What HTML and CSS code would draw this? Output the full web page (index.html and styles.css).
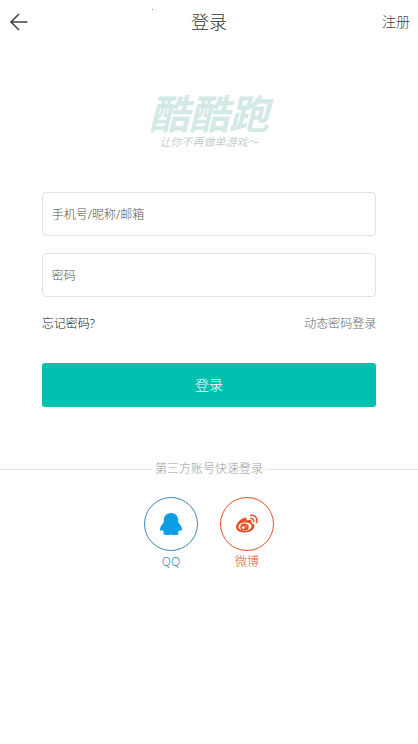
FILE: index.html
```html
<!DOCTYPE html>
<html lang="zh-CN">
<head>
<meta charset="utf-8">
<meta name="viewport" content="width=device-width, initial-scale=1">
<title>登录</title>
<link rel="stylesheet" href="styles.css">
</head>
<body>
<header class="topbar">
  <a class="back" href="#" aria-label="返回">
    <svg width="20" height="20" viewBox="0 0 20 20" fill="none" stroke="#444" stroke-width="1.6"><path d="M19.500 10H3M11 2L3 10l8 8"/></svg>
  </a>
  <h1 class="title">登录</h1>
  <a class="register" href="#">注册</a>
  <span class="dot"></span>
</header>
<main>
  <div class="brand">
    <div class="brand-name">酷酷跑</div>
    <div class="brand-line">让你不再做单游戏～</div>
  </div>
  <form class="login">
    <input class="field" type="text" aria-label="手机号/昵称/邮箱" placeholder="手机号/昵称/邮箱">
    <input class="field" type="password" aria-label="密码" placeholder="密码">
    <div class="links">
      <a class="forgot" href="#">忘记密码?</a>
      <a class="dynamic" href="#">动态密码登录</a>
    </div>
    <button class="submit" type="submit">登录</button>
  </form>
  <section class="third">
    <h2 class="divider">第三方账号快速登录</h2>
    <div class="providers">
      <a class="provider qq" href="#">
        <span class="ring">
          <svg width="24" height="24" viewBox="0 0 24 24" fill="currentColor"><path d="M12 1C7.500 1 4.800 4 4.800 8.500v1.800C3 12.500 1 15 1 17.300c0 1.500 1.200 1.700 3 .9.200.9.600 1.700 1.200 2.400C3.500 21.500 4 23 7.500 23c1.800 0 3.500-.2 4.500-.6 1 .4 2.700.6 4.500.6 3.500 0 4-1.500 2.300-2.400.6-.7 1-1.500 1.200-2.400 1.800.8 3 .6 3-.9 0-2.300-2-4.800-3.800-7V8.500C19.200 4 16.500 1 12 1z"/></svg>
        </span>
        QQ
      </a>
      <a class="provider weibo" href="#">
        <span class="ring">
          <svg width="24" height="24" viewBox="0 0 24 24"><path fill="currentColor" fill-rule="evenodd" d="M9 6C11 5 12 6 11.500 8.500c3-1.300 5.500-1 5 1.500 0 1 0 1.200 1 1.500 2 .7 2.500 2.500 1.500 4.500-1.500 3-5 4.500-9.500 4.500C4 20.500 1 18 1 15c0-3.500 4.500-8 8-9zM10 10.500c-4 0-6.500 2-6.500 4.300S6 18.700 9.700 18.700s6.800-2 6.800-4.500-2.500-3.700-6.500-3.700z"/><ellipse cx="9.500" cy="15" rx="4.300" ry="3.500" fill="currentColor"/><circle cx="8.300" cy="15.600" r="1.400" fill="#fff"/><circle cx="11" cy="14" r=".6" fill="#fff"/><path fill="none" stroke="currentColor" stroke-width="1.500" stroke-linecap="round" d="M15.500 3.500c4.500-1 7.500 2.500 6 7M15.800 6.500c2-.3 3.200 1 2.700 3"/></svg>
        </span>
        微博
      </a>
    </div>
  </section>
</main>
</body>
</html>
```
FILE: styles.css
```css
* { box-sizing: border-box; }
body {
  margin: 0;
  background: #fff;
  color: #333;
  font: 12px/20px "Noto Sans", "Noto Sans CJK SC", sans-serif;
  font-weight: 300;
}
a { color: inherit; text-decoration: none; }
.topbar {
  position: relative;
  display: grid;
  grid-template-columns: 1fr auto 1fr;
  align-items: center;
  height: 44px;
  padding: 0 8px;
}
.back { display: flex; }
.title { margin: 0; font-size: 18px; line-height: 24px; font-weight: 300; }
.register { justify-self: end; font-size: 14px; color: #444; }
.dot {
  position: absolute;
  top: 9px;
  left: 152px;
  width: 1px;
  height: 1px;
  background: #888;
}
.brand {
  display: flex;
  flex-direction: column;
  align-items: center;
  gap: 4px;
  padding-top: 48px;
  height: 148px;
}
.brand-name {
  font-family: "Noto Sans CJK SC", sans-serif;
  font-size: 40px;
  line-height: 40px;
  font-style: italic;
  font-weight: 700;
  color: #d3e9e6;
}
.brand-line {
  font-size: 11px;
  line-height: 12px;
  font-style: italic;
  color: #a8b8b6;
}
.login {
  display: flex;
  flex-direction: column;
  padding: 0 10%;
}
.field {
  width: 100%;
  height: 44px;
  margin: 0 0 17px;
  padding: 0 9px;
  border: 1px solid #e2e2e2;
  border-radius: 4px;
  background: #fff;
  color: #333;
  font: inherit;
}
.field::placeholder { color: #555; opacity: 1; }
.links { display: flex; justify-content: space-between; }
.forgot { color: #111; }
.dynamic { color: #666; }
.submit {
  height: 44px;
  margin: 29px 0 0;
  padding: 0;
  border: 0;
  border-radius: 3px;
  background: #00c1b0;
  color: #fff;
  font: inherit;
  font-size: 14px;
}
.third { margin-top: 52px; }
.divider {
  display: flex;
  align-items: center;
  gap: 3px;
  margin: 0;
  font-size: 12px;
  line-height: 20px;
  font-weight: 300;
  color: #999;
}
.divider::before, .divider::after {
  content: "";
  flex: 1;
  height: 1px;
  background: #e2e2e2;
}
.providers { display: flex; justify-content: center; gap: 22px; margin-top: 18px; }
.provider { display: flex; flex-direction: column; align-items: center; }
.ring {
  display: flex;
  align-items: center;
  justify-content: center;
  width: 54px;
  height: 54px;
  margin-bottom: 1px;
  border: 1px solid;
  border-radius: 50%;
}
.qq { color: #3a87b7; }
.qq svg { color: #0c9ee5; }
.weibo { color: #e65128; }
```
